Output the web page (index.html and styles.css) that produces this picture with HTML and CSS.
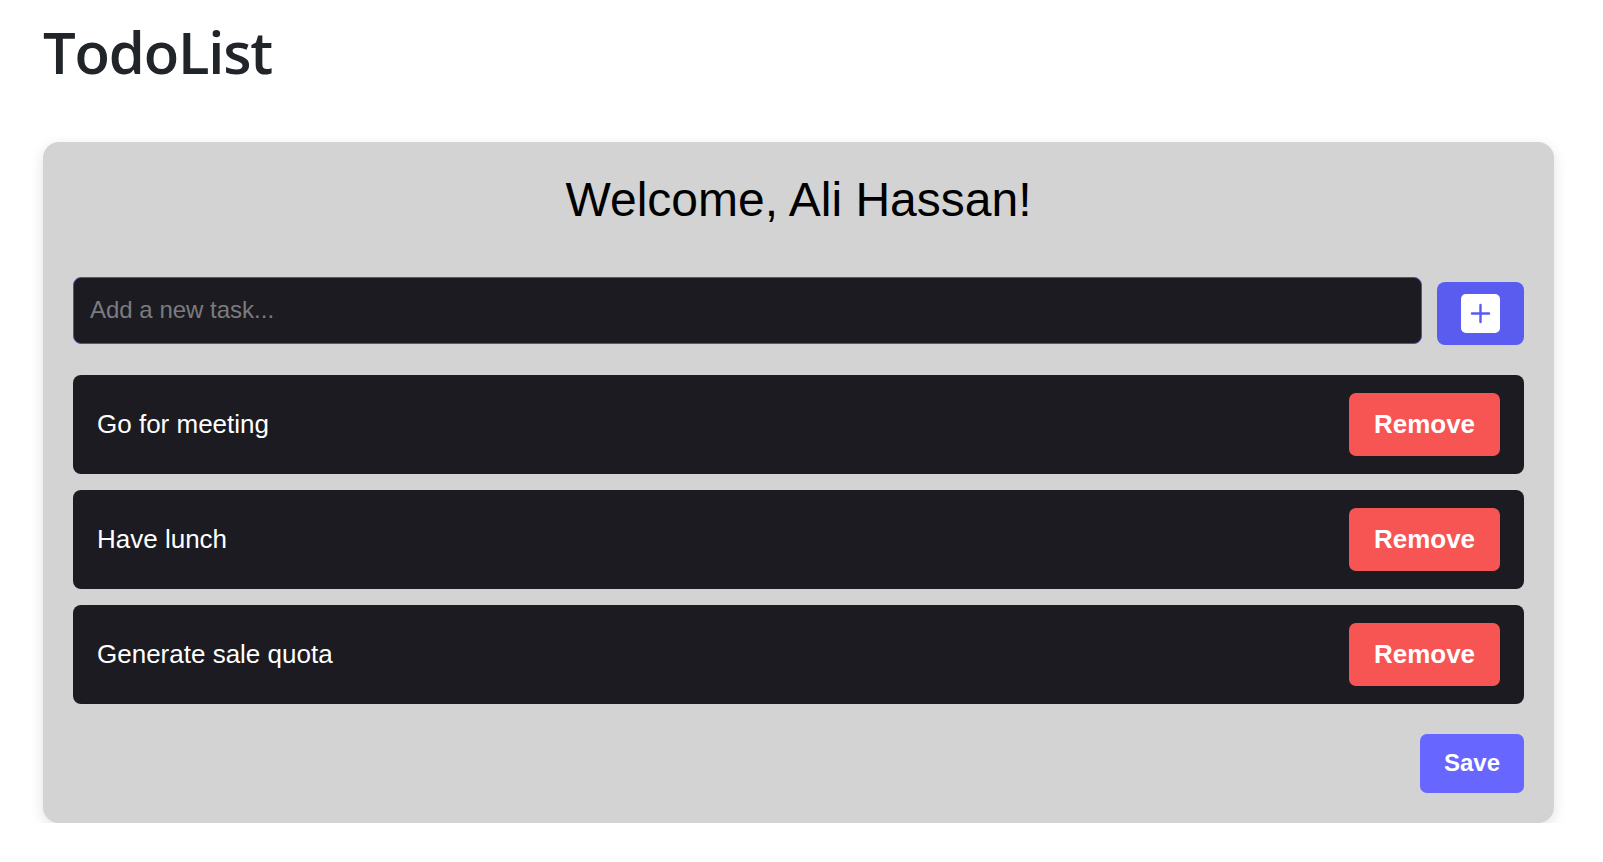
FILE: index.html
```html
<!DOCTYPE html>
<html lang="en">
<head>
<meta charset="utf-8">
<title>TodoList</title>
<link rel="stylesheet" href="styles.css">
</head>
<body>
<div class="page">
  <h1 class="title">TodoList</h1>
  <div class="card">
    <h2 class="welcome">Welcome, Ali Hassan!</h2>
    <div class="add-row">
      <input class="task-input" type="text" placeholder="Add a new task...">
      <button class="add-btn" type="button" aria-label="Add">
        <svg class="add-icon" viewBox="0 0 16 16" width="39" height="39"><path fill="#fff" d="M2 0a2 2 0 0 0-2 2v12a2 2 0 0 0 2 2h12a2 2 0 0 0 2-2V2a2 2 0 0 0-2-2H2zm6.5 4.5v3h3a.5.5 0 0 1 0 1h-3v3a.5.5 0 0 1-1 0v-3h-3a.5.5 0 0 1 0-1h3v-3a.5.5 0 0 1 1 0z"/></svg>
      </button>
    </div>
    <ul class="tasks">
      <li class="task"><span class="task-text">Go for meeting</span><button class="remove-btn" type="button">Remove</button></li>
      <li class="task"><span class="task-text">Have lunch</span><button class="remove-btn" type="button">Remove</button></li>
      <li class="task"><span class="task-text">Generate sale quota</span><button class="remove-btn" type="button">Remove</button></li>
    </ul>
    <div class="actions">
      <button class="save-btn" type="button">Save</button>
    </div>
  </div>
</div>
</body>
</html>
```
FILE: styles.css
```css
* { box-sizing: border-box; }
html, body { margin: 0; background: #fff; }
body { font-family: "Liberation Sans", Arial, sans-serif; }

.page {
  padding: 17px 49px 0 43px;
}

.title {
  margin: 0 0 55px 0;
  font-family: "Open Sans", "Noto Sans", sans-serif;
  font-weight: 600;
  font-size: 58px;
  line-height: 1.2;
  color: #212529;
  letter-spacing: -1.2px;
}

.card {
  background: #d3d3d3;
  border-radius: 16px;
  padding: 30px;
  box-shadow: 0 4px 14px rgba(0, 0, 0, 0.12);
}

.welcome {
  margin: 0 0 50px 0;
  text-align: center;
  font-weight: 400;
  font-size: 48px;
  line-height: normal;
  color: #000;
}

.add-row {
  display: flex;
  align-items: flex-end;
  gap: 15px;
}

.task-input {
  flex: 1;
  height: 67px;
  background: #1b1b21;
  border: 1px solid #4b4bd8;
  border-radius: 8px;
  padding: 0 16px;
  font-family: "Liberation Sans", Arial, sans-serif;
  font-size: 24px;
  color: #fff;
  outline: none;
}
.task-input::placeholder { color: #7b7b80; }

.add-btn {
  width: 87px;
  height: 63px;
  margin-bottom: -1px;
  border: none;
  border-radius: 8px;
  background: #5a5cf0;
  display: flex;
  align-items: center;
  justify-content: center;
  padding: 0;
  cursor: pointer;
}
.add-icon { display: block; }

.tasks {
  list-style: none;
  margin: 31px 0 0 0;
  padding: 0;
  display: flex;
  flex-direction: column;
  gap: 16px;
}

.task {
  display: flex;
  align-items: center;
  justify-content: space-between;
  height: 99px;
  background: #1b1b21;
  border-radius: 8px;
  padding: 0 24px 0 24px;
}

.task-text {
  color: #fff;
  font-size: 26px;
}

.remove-btn {
  width: 151px;
  height: 63px;
  border: none;
  border-radius: 7px;
  background: #f75454;
  color: #fff;
  font-family: "Liberation Sans", Arial, sans-serif;
  font-weight: 700;
  font-size: 26px;
  padding: 0;
  cursor: pointer;
}

.actions {
  display: flex;
  justify-content: flex-end;
  margin-top: 30px;
}

.save-btn {
  width: 104px;
  height: 59px;
  border: none;
  border-radius: 7px;
  background: #6767ff;
  color: #fff;
  font-family: "Liberation Sans", Arial, sans-serif;
  font-weight: 700;
  font-size: 24px;
  padding: 0;
  cursor: pointer;
}
```
